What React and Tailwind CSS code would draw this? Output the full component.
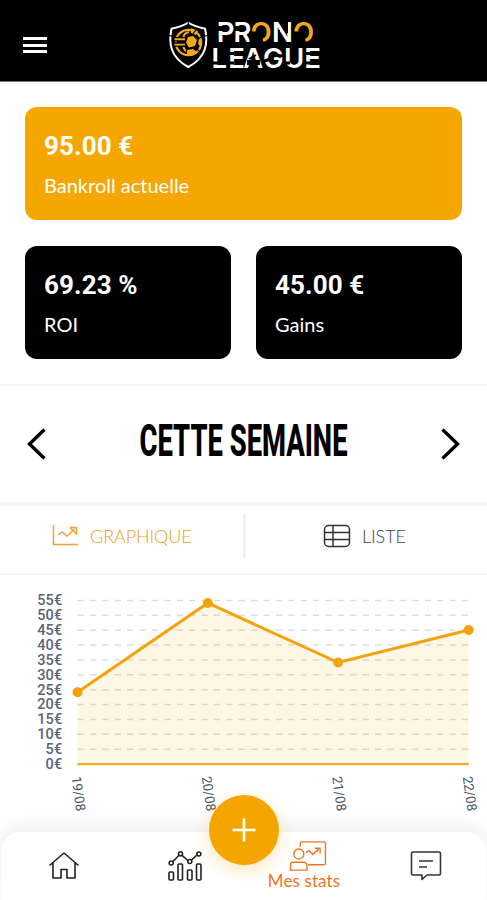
import React from "react";

function Logo() {
  return (
    <svg className="overflow-visible" width="154" height="52" viewBox="168 19 154 52" role="img" aria-label="Prono League">
      <path
        d="M188.300 22.500C183.500 26 177 27.500 171.500 28.700C168.500 43 170 57 188.300 67C206.600 57 208.100 43 205.100 28.700C199.600 27.500 193.100 26 188.300 22.500Z"
        fill="none"
        stroke="#fff"
        strokeWidth="2"
      />
      <path d="M188.300 19v6M168 35l6 2M208.500 35l-6 2" stroke="#000" strokeWidth="1.200" />
      <circle cx="188.500" cy="42.500" r="12.700" fill="none" stroke="#f5a81c" strokeWidth="2.200" />
      <path d="M174.500 39.300h11.500M174.500 44.600h11.500" stroke="#000" strokeWidth="4.500" />
      <path d="M174.500 39.300h10.500M174.500 44.600h10.500" stroke="#f5a81c" strokeWidth="1.900" />
      <path d="M183.500 37c.5-3 2.500-4.500 5.500-5M183.500 47c.5 3 2.500 4.500 5.500 5" fill="none" stroke="#f5a81c" strokeWidth="2" />
      <path
        d="M188 37l5-1 4 4-2 6-6 1.500-3-5zM191 28l7 3-2 4-5-2zM199 38l3 3-1 6-3-3zM187 50l6-1 4 3-5 4-5-1z"
        fill="#f5a81c"
      />
      <path d="M196 30l-4 5M197 40l4-3M195 47l4 4M188 47l-2 5" stroke="#000" strokeWidth="1.200" />
      <g fontFamily="Inter, sans-serif" fontSize="27.500" fontWeight="600" fill="#fff">
        <text x="216.800 233.600 250.400 272 293" y="41.800">
          PR<tspan fill="#f5a81c">O</tspan>N<tspan fill="#f5a81c">O</tspan>
        </text>
        <text x="211.500 228.200 243.300 263 284 304.300" y="68">LEAGUE</text>
      </g>
      <path d="M249.500 31.500H261.500L263.500 43.500H249.500ZM292 31.500H304L306 43.500H292Z" fill="#000" />
      <g fill="none" stroke="#000" strokeWidth="3">
        <path d="M217 27.500H223M217 29.500H223M234 27.500H240M234 29.500H240" />
        <path d="M279 30V43M287 21V33" strokeWidth="2" />
        <path d="M212 63H218.500M228 53.500H234M228 63H234" />
        <path d="M247 62.500H260" strokeWidth="5" />
        <path d="M256 55L249 59" strokeWidth="2" />
        <path d="M263.500 61.500L270 59M276 54L281 57" />
        <path d="M284.500 63H290M305 53.500H310.500M305 63H310.500" />
      </g>
    </svg>
  );
}

function StatCard({ value, label, className }) {
  return (
    <div className={`flex h-[113px] flex-col rounded-xl pl-[19px] pt-[23px] text-white ${className}`}>
      <p className="font-[Roboto,sans-serif] text-[26px] font-bold leading-8 tracking-[0.1px]">{value}</p>
      <p className="mt-2 font-[Lato,sans-serif] text-[20px] leading-[30px]">{label}</p>
    </div>
  );
}

function Chevron({ flip }) {
  return (
    <svg width="20" height="32" viewBox="0 0 20 32" className={flip ? "-scale-x-100" : ""}>
      <path d="M17.500 1.500L2.500 16L17.500 30.500" fill="none" stroke="#000" strokeWidth="3.400" />
    </svg>
  );
}

const POINTS = [
  [77.5, 692.3, "19/08"],
  [207.8, 603, "20/08"],
  [338.2, 662.5, "21/08"],
  [468.7, 630, "22/08"],
];
const TICKS = [55, 50, 45, 40, 35, 30, 25, 20, 15, 10, 5, 0];

function Chart() {
  const line = POINTS.map(([x, y]) => `${x},${y}`).join(" ");
  return (
    <svg className="block" width="487" height="257" viewBox="0 575 487 257">
      <polygon points={`77.500,764 ${line} 468.700,764`} fill="#fef7e6" />
      {TICKS.slice(0, 11).map((t, i) => (
        <path key={t} d={`M77.500 ${600.5 + i * 14.87}H469`} stroke="#000" strokeOpacity="0.13" strokeWidth="1.500" strokeDasharray="6.200 6.200" />
      ))}
      <path d="M77.500 764.200H468.700" stroke="#efb021" strokeWidth="2.300" />
      <polyline points={line} fill="none" stroke="#f4a30b" strokeWidth="3" />
      {POINTS.map(([x, y]) => (
        <circle key={x} cx={x} cy={y} r="5" fill="#f4a30b" />
      ))}
      <g fontFamily="Roboto, sans-serif" fontSize="14.500" fontWeight="500" fill="#5b6577" textAnchor="end">
        {TICKS.map((t, i) => (
          <text key={t} x="62.500" y={605.3 + i * 14.87} letterSpacing="0.200">{t}€</text>
        ))}
      </g>
      <g fontFamily="Roboto, sans-serif" fontSize="13.500" fill="#4b5563">
        {POINTS.map(([x, , d]) => (
          <text key={d} transform={`translate(${x - 6} 777) rotate(82)`} textLength="35">{d}</text>
        ))}
      </g>
    </svg>
  );
}

function BottomNav() {
  return (
    <nav className="relative mx-px flex h-[68px] rounded-t-[20px] bg-white shadow-[0_-4px_24px_rgba(0,0,0,0.08)]">
      <a className="flex w-[125px] justify-center pt-[19px]">
        <svg width="32" height="30" viewBox="0 0 32 30" fill="none" stroke="#222" strokeWidth="1.600" strokeLinejoin="round">
          <path d="M1.500 14.500L16 2L30.500 14.500M5 12V27H13V18.500H19V27H27V12" />
        </svg>
      </a>
      <a className="flex w-[118px] justify-center pt-[18px]">
        <svg width="36" height="32" viewBox="0 0 36 32" fill="none" stroke="#222" strokeWidth="1.600">
          <rect x="2" y="22" width="4.500" height="8" rx="1" />
          <rect x="11" y="14" width="4.500" height="16" rx="1" />
          <rect x="20.500" y="20" width="4.500" height="10" rx="1" />
          <rect x="29.500" y="14" width="4.500" height="16" rx="1" />
          <circle cx="4.200" cy="13" r="2" />
          <circle cx="13.500" cy="3.800" r="2" />
          <circle cx="22.800" cy="11.500" r="2" />
          <circle cx="31.800" cy="4" r="2" />
          <path d="M6 11.500L12 5.300M15 5.300L21 10.500M24.500 10L30 5" />
        </svg>
      </a>
      <a className="flex w-[120px] flex-col items-center pt-2">
        <svg className="ml-2" width="40" height="32" viewBox="0 0 40 33" fill="none" stroke="#ed7623" strokeWidth="1.400">
          <path d="M12 7V3.500Q12 2 13.500 2H36.500Q38 2 38 3.500V24Q38 25.500 36.500 25.500H20" />
          <circle cx="10.500" cy="14.500" r="5.200" />
          <path d="M4 23H15Q19 23 19 27V31H2V26Q2 23 4 23Z" />
          <path d="M18 13L21 11L25 15L31 9M27 8.500H32.500V14M30 9V12" />
        </svg>
        <span className="font-[Lato,sans-serif] text-[17px] leading-[18px] tracking-[0.1px] text-[#ed7623]">Mes stats</span>
      </a>
      <a className="flex flex-1 justify-center pl-px pt-[18px]">
        <svg width="32" height="32" viewBox="0 0 32 32" fill="none" stroke="#333" strokeWidth="1.600" strokeLinejoin="round">
          <path d="M3 2H29Q30.500 2 30.500 3.500V23.500Q30.500 25 29 25H17L12 29.500V25H3Q1.500 25 1.500 23.500V3.500Q1.500 2 3 2Z" />
          <path d="M9 11H23M9 17H17" />
        </svg>
      </a>
      <button aria-label="Ajouter" className="absolute -top-[37px] left-[208px] flex size-[70px] items-center justify-center rounded-full bg-[#f5a500] shadow-[0_5px_18px_rgba(245,165,0,0.28)]">
        <svg width="24" height="24" viewBox="0 0 24 24">
          <path d="M12 0.500V23.500M0.500 12H23.500" stroke="#fff" strokeWidth="2.600" />
        </svg>
      </button>
    </nav>
  );
}

export default function App() {
  return (
    <div className="flex h-[900px] w-[487px] flex-col overflow-hidden bg-white">
      <header className="flex h-[82px] shrink-0 border-b border-[#77776a] bg-black pl-[23px]">
        <div className="mt-9 flex w-6 flex-col gap-[3.500px] pt-px">
          <span className="h-[3px] bg-white" />
          <span className="h-[3px] bg-white" />
          <span className="h-[3px] bg-white" />
        </div>
        <div className="ml-[121px] mt-[19px]">
          <Logo />
        </div>
      </header>

      <section className="grid h-[304px] shrink-0 grid-cols-2 content-start gap-x-[25px] gap-y-[26px] border-b-2 border-[#f7f7f7] px-[25px] pt-[25px]">
        <StatCard value="95.00 €" label="Bankroll actuelle" className="col-span-2 bg-[#f5a700]" />
        <StatCard value="69.23 %" label="ROI" className="bg-black" />
        <StatCard value="45.00 €" label="Gains" className="bg-black" />
      </section>

      <section className="flex h-[116px] shrink-0 items-center justify-between px-[27px]">
        <Chevron />
        <h1 className="flex">
          <svg className="overflow-visible" width="210" height="46" viewBox="0 0 210 46">
            <text x="0.500" y="35.300" fontFamily="Roboto, sans-serif" fontSize="43.500" fontWeight="800" textLength="208" lengthAdjust="spacingAndGlyphs">CETTE SEMAINE</text>
          </svg>
        </h1>
        <Chevron flip />
      </section>

      <section className="flex h-[73px] shrink-0 border-b-2 border-t-4 border-[#f6f6f6]">
        <div className="flex w-[243px] items-center pb-[6px] pl-[52px]">
          <svg className="-mt-1" width="27" height="22" viewBox="0 0 27 22" fill="none" stroke="#eda43a" strokeWidth="1.500">
            <path d="M1.500 1V20.500H26M6 11L10 8L15 12L22.500 5M18 3.500H24.500V10L18 3.500" />
          </svg>
          <span className="ml-[11px] font-[Lato,sans-serif] text-[18px] font-light tracking-[-0.1px] text-[#ed9d20]">GRAPHIQUE</span>
        </div>
        <div className="mt-2 h-[44px] w-[3px] rounded bg-[#f1f1f1]" />
        <div className="flex items-center pb-[6px] pl-[77px]">
          <svg className="-mt-0.5" width="28" height="24" viewBox="0 0 28 24" fill="none" stroke="#333" strokeWidth="1.500">
            <rect x="1.500" y="1.500" width="25" height="21" rx="4" />
            <path d="M10 1.500V22.500M1.500 8.500H26.500M1.500 15.500H26.500" />
          </svg>
          <span className="ml-[11px] font-[Lato,sans-serif] text-[18px] font-light tracking-[-0.1px] text-[#444]">LISTE</span>
        </div>
      </section>

      <Chart />
      <BottomNav />
    </div>
  );
}
